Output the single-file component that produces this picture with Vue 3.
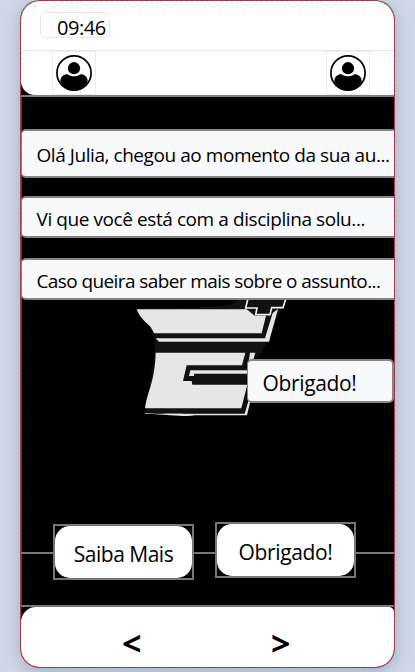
<script setup>
const messages = [
  { text: 'Olá Julia, chegou ao momento da sua au...', kind: 'first' },
  { text: 'Vi que você está com a disciplina solu...', kind: 'second' },
  { text: 'Caso queira saber mais sobre o assunto...', kind: 'third' },
]
const sides = ['left', 'right']
</script>

<template>
  <div class="page">
    <main class="phone">
      <header class="header">
        <div class="status"><span class="clock">09:46</span></div>
        <div class="people">
          <div v-for="s in sides" :key="s" class="avatar">
            <svg viewBox="0 0 36 36" width="36" height="36">
              <circle cx="18" cy="18" r="17.1" fill="#fff" stroke="#000" stroke-width="1.7" />
              <circle cx="18" cy="13.2" r="6.1" />
              <path d="M4.400 27V25C5 21.800 7.200 19.300 11.500 19.300C15.500 22 20.500 22 24.500 19.300C28.800 19.300 31 21.800 31.600 25V27C28.500 32 23.600 35 18 35S7.500 32 4.400 27Z" />
            </svg>
          </div>
        </div>
      </header>

      <section class="chat">
        <svg class="emblem" viewBox="0 0 540 420" width="180" height="140">
          <path fill="#111" d="M265 66C310 64 340 64 355 42H500L420 212L380 230V385L75 384L78 368L105 203L100 145L50 72Z" />
          <path fill="#e6e6e6" d="M50 73H380L404 92H438L425 145H102C92 115 65 112 50 73Z" />
          <path fill="#e6e6e6" d="M107 160H435L458 84L474 72L447 170H117Z" />
          <path fill="#e6e6e6" d="M107 203H376L366 241H200L189 288H215L217 299H382L364 370H75C80 325 105 290 107 203Z" />
          <path fill="#e6e6e6" d="M211 256H382L390 203H406L395 240L383 266H222V273H207Z" />
          <path fill="#e6e6e6" d="M75 384C105 388 160 385 190 386H374L386 345H392L381 391H225C195 396 155 389 75 386Z" />
          <path fill="#111" stroke="#f2f2f2" stroke-width="5" d="M384 40L377 69H411L407 89H450L455 68H489L498 40" />
        </svg>
        <div v-for="m in messages" :key="m.kind" class="bubble" :class="m.kind">
          <span>{{ m.text }}</span>
        </div>
        <div class="bubble reply"><span>Obrigado!</span></div>
        <div class="actions">
          <i class="rule lead"></i>
          <div class="choice more"><button>Saiba Mais</button></div>
          <i class="rule middle"></i>
          <div class="choice thanks"><button>Obrigado!</button></div>
          <i class="rule tail"></i>
        </div>
      </section>

      <footer class="footer">
        <div class="nav">
          <span class="arrow">&lt;</span>
          <span class="arrow">&gt;</span>
        </div>
      </footer>
    </main>
  </div>
</template>

<style>
body {
  margin: 0;
  overflow: hidden;
}
</style>

<style scoped>
.page {
  box-sizing: border-box;
  width: 415px;
  height: 672px;
  padding-left: 20px;
  background: #d0d7e8;
  font-family: "Open Sans", "Noto Sans", sans-serif;
  color: #000;
  overflow: hidden;
}
.phone {
  box-sizing: border-box;
  width: 375px;
  height: 668px;
  display: flex;
  flex-direction: column;
  border: 1px dashed #d0202c;
  border-radius: 20px;
  background: #666;
  box-shadow: 0 4px 16px rgba(60, 75, 110, 0.3);
  overflow: hidden;
}
.header {
  box-sizing: border-box;
  height: 96px;
  flex: none;
  background: #000;
  border-bottom: 2px solid #808080;
}
.status {
  box-sizing: border-box;
  height: 50px;
  padding: 11px 0 0 19px;
  border-bottom: 1px solid #e8e8e8;
  background: #fff;
}
.clock {
  box-sizing: border-box;
  display: block;
  width: 70px;
  height: 26px;
  padding-left: 16px;
  border: 1px solid #e8e8e8;
  border-radius: 5px;
  font-size: 20px;
  line-height: 29px;
  white-space: nowrap;
  letter-spacing: -0.45px;
}
.people {
  display: flex;
  justify-content: space-between;
  padding: 0 24px 0 31px;
  border-radius: 0 0 0 14px;
  background: #fff;
}
.avatar {
  box-sizing: border-box;
  width: 44px;
  height: 44px;
  padding: 3px;
  border: 1px solid #ececec;
}
.avatar svg {
  display: block;
}
.chat {
  position: relative;
  box-sizing: border-box;
  flex: none;
  height: 508px;
  padding-top: 32px;
  background: #000;
  box-shadow: inset 1px 0 #444;
}
.emblem {
  position: absolute;
  left: 99px;
  top: 188px;
}
.bubble {
  position: relative;
  box-sizing: border-box;
  display: flex;
  align-items: center;
  padding: 3px 0 0 14.5px;
  border: 2px solid #858585;
  border-left-width: 1px;
  border-radius: 5px;
  background: #f8f9fb;
  font-size: 19px;
  white-space: nowrap;
}
.first,
.second,
.third {
  border-right: 0;
  border-radius: 5px 0 0 5px;
}
.first {
  height: 49px;
  letter-spacing: -0.44px;
}
.second {
  height: 42px;
  margin-top: 18px;
  letter-spacing: -0.42px;
}
.third {
  height: 42px;
  margin-top: 20px;
  letter-spacing: -0.6px;
}
.reply {
  width: 147px;
  height: 44px;
  margin: 59px 0 0 auto;
  font-size: 21px;
  letter-spacing: -0.35px;
}
.actions {
  display: flex;
  align-items: flex-start;
  margin-top: 119px;
}
.rule {
  height: 2px;
  margin-top: 30px;
  background: #777;
}
.lead {
  width: 32px;
}
.middle {
  width: 21px;
}
.tail {
  flex: 1;
}
.choice {
  box-sizing: border-box;
  width: 141px;
  height: 56px;
  border: 2px solid #777;
}
.more {
  margin-top: 2px;
}
button {
  display: block;
  width: 100%;
  height: 100%;
  padding: 3px 0 0;
  border: 0;
  border-radius: 15px;
  background: #fff;
  color: #000;
  font: 21px "Open Sans", "Noto Sans", sans-serif;
  letter-spacing: -0.35px;
}
.more button {
  letter-spacing: -0.5px;
}
.footer {
  box-sizing: border-box;
  flex: 1;
  border-top: 2px solid #777;
  background: #000;
}
.nav {
  box-sizing: border-box;
  height: 100%;
  display: flex;
  gap: 129px;
  padding: 14px 0 0 101px;
  border-radius: 15px 5px 0 0;
  background: #fff;
}
.arrow {
  width: 20px;
  font-size: 34px;
  font-weight: 700;
  line-height: 44px;
}
</style>
